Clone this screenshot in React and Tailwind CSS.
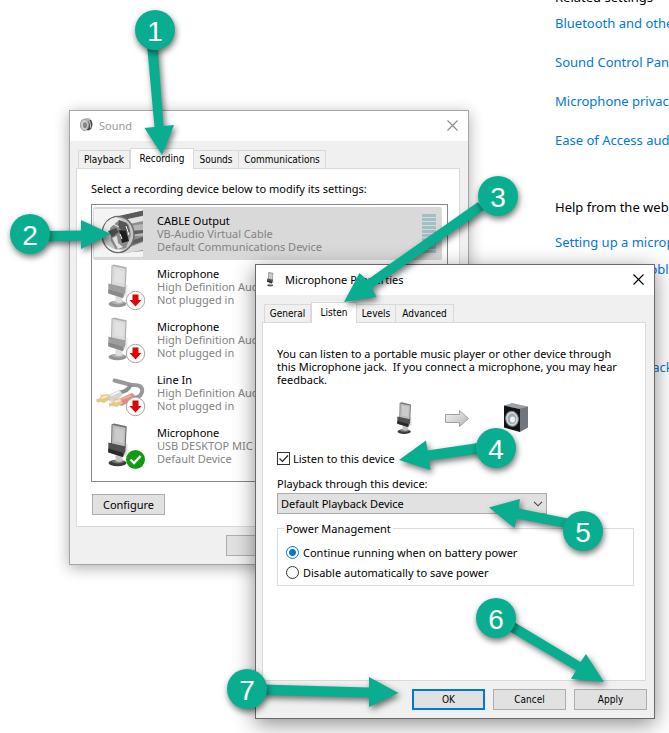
import { useId } from "react";

const GREEN = "#09ae90";

function MicShape({ faded = false }) {
  return (
    <g opacity={faded ? 0.55 : 1}>
      <ellipse cx="24.500" cy="44" rx="9" ry="3.200" fill="#3c3c3c" />
      <ellipse cx="25" cy="42.600" rx="6" ry="1.800" fill="#777" />
      <path d="M22.500 35h7v7q-3.500 1.800-7 0z" fill="#c4c4c4" />
      <path d="M29.500 25l5-.5v11l-5 3z" fill="#dcdcdc" />
      <path d="M18.500 5.500l2.500-1 12.700 2.800-1 21.500-14.700-3z" fill="#707070" />
      <path d="M19.500 6l13 2.800-.9 19-12.600-2.300z" fill="#bdbdbd" />
      <path d="M22 9l8.800 1.900-.6 13-8.800-2z" fill="#cbcbcb" />
      <path d="M15.300 23.500l17.200 4v4.500l-2.500 6-14.700-4.600z" fill="#505050" />
      <path d="M15.300 29.500l14.700 4.200v4.200l-14.700-4.600z" fill="#2a2a2a" />
    </g>
  );
}

function UnpluggedBadge() {
  return (
    <g>
      <circle cx="42.500" cy="40.500" r="9.200" fill="#fff" stroke="#a6a6a6" />
      <path d="M39.500 34.500h6v5.500h3l-6 6.500-6-6.500h3z" fill="#dc0505" />
    </g>
  );
}

function CheckBadge() {
  return (
    <g>
      <circle cx="42.500" cy="40.500" r="9.500" fill="#129a12" />
      <path d="M37.500 40.500l3.500 3.500 6.500-7" fill="none" stroke="#fff" strokeWidth="2.400" />
    </g>
  );
}

function CableIcon() {
  return (
    <svg viewBox="0 0 64 53" className="h-[53px] w-16 shrink-0" aria-hidden="true">
      <rect x="1" y="2" width="49" height="48" fill="#f4f4f4" />
      <path d="M26 9L50 4v40L28 46z" fill="#8d8d8d" />
      <path d="M26 9L50 3.500v5L30 13z" fill="#5a5a5a" />
      <path d="M30 13l20-4v5l-18 4z" fill="#e2e2e2" />
      <path d="M36 19l14-2v12H38z" fill="#b5b5b5" />
      <path d="M37 24l13-1v3l-13 2zM37 34l13-4v4l-14 5z" fill="#5d5d5d" />
      <path d="M32 42l18-7v8L28 47z" fill="#d9d9d9" />
      <ellipse cx="25" cy="27.500" rx="16" ry="18" fill="#c6c6c6" stroke="#6b6b6b" strokeWidth="1.500" />
      <path d="M10 24q2-12 13-14l6 3-8 9-10 6z" fill="#ececec" />
      <path d="M17 21l9-8 10 5 2 10-5 13-10 2-5-9z" fill="#8a8a8a" />
      <path d="M26 13l8 3 3 9-5 1-7-6z" fill="#555" />
      <path d="M26 23l7 1 3 10-7 2z" fill="#1e1e1e" />
      <path d="M15 24l8-3 3 4-7 5z" fill="#4c4c4c" />
      <path d="M19 31l5-2 1 7 5 4-5 2z" fill="#e4e4e4" />
      <path d="M27 27l2 5M33 19l3 9M20 17l6 3" stroke="#f5f5f5" strokeWidth="1" />
      <path d="M12 37q5 8 14 8l4-2-9-1z" fill="#f2f2f2" />
    </svg>
  );
}

function DeviceMic({ faded }) {
  return (
    <svg viewBox="0 0 64 53" className="h-[53px] w-16 shrink-0" aria-hidden="true">
      <MicShape faded={faded} />
      {faded ? <UnpluggedBadge /> : <CheckBadge />}
    </svg>
  );
}

function LineInIcon() {
  return (
    <svg viewBox="0 0 64 53" className="h-[53px] w-16 shrink-0" aria-hidden="true">
      <g fill="none" strokeLinecap="round">
        <path d="M21.500 14.500l17 4.500q12-1 10.500 7-2 7-11 5.500" stroke="#999" strokeWidth="4" />
        <path d="M37 20q-2 5-10 6.500" stroke="#8e8e8e" strokeWidth="4" />
      </g>
      <path d="M15 29l11-5q4 2 3 6l-10 6q-5-1-4-7z" fill="#d3d3d8" />
      <path d="M17 29l8-4 3 1-9 4z" fill="#f3f3f3" />
      <path d="M3 33.500l4-1.500 1-3 7-1 2 5-6 4-3-1-4 .5z" fill="#e6c886" />
      <path d="M8 31l6-2 1 2-6 2z" fill="#f7e6bb" />
      <path d="M26 33l13-6q4 2 3 6l-13 7q-5-1-3-7z" fill="#e08b84" />
      <path d="M28 33l9-4 3 1-11 4z" fill="#efb1ab" />
      <path d="M16 37.500l4-1.500 1-3 6-1 3 5-6 4-4-1-4 .5z" fill="#e6c886" />
      <path d="M21 35l6-2 1 2-6 2z" fill="#f7e6bb" />
      <UnpluggedBadge />
    </svg>
  );
}

function SoundTitleIcon() {
  return (
    <svg viewBox="0 0 16 16" className="size-4" aria-hidden="true">
      <ellipse cx="9" cy="7.500" rx="4.500" ry="6" fill="#4a4a4a" />
      <path d="M2 3l5-2 5 1-3 3-5 8-3-3z" fill="#b9b9b9" />
      <ellipse cx="5.500" cy="8" rx="4" ry="5.600" fill="#cfcfcf" stroke="#a0a0a0" />
      <ellipse cx="6" cy="8.200" rx="2" ry="3" fill="#858585" />
      <path d="M10.500 4l1.500 7" stroke="#d5d5d5" />
    </svg>
  );
}

function MicTitleIcon() {
  return (
    <svg viewBox="9 1 48 48" className="size-4" aria-hidden="true">
      <MicShape />
    </svg>
  );
}

function PushButton({ primary, children }) {
  return (
    <button
      className={`h-[21px] w-[73px] bg-[#e1e1e1] font-['DejaVu_Sans_Condensed','DejaVu_Sans',sans-serif] text-[10px] leading-[13px] ${
        primary ? "border-2 border-[#0078d7]" : "border border-[#adadad]"
      }`}
    >
      {children}
    </button>
  );
}

function Window({ title, icon, tabs, active, inactive, place, footer, children }) {
  return (
    <section
      className={`absolute flex w-[400px] flex-col border bg-[#f0f0f0] ${
        inactive
          ? "border-[#a5a5a5] shadow-[0_3px_14px_rgba(0,0,0,0.32)]"
          : "border-[#686868] shadow-[0_5px_20px_rgba(0,0,0,0.45)]"
      } ${place}`}
    >
      <header className="flex h-[30px] items-center gap-1 bg-white pr-2.5 pb-0.5 pl-[9px]">
        {icon}
        <h2 className={`flex-1 text-[11px] leading-[13px] ${inactive ? "text-[#999]" : "text-black"}`}>{title}</h2>
        <button aria-label="Close">
          <svg viewBox="0 0 11 11" className={`size-[11px] ${inactive ? "text-[#8a8a8a]" : "text-black"}`}>
            <path d="M.5.5l10 10M10.500.5l-10 10" stroke="currentColor" strokeWidth="1.100" fill="none" />
          </svg>
        </button>
      </header>
      <div className="pt-[7px] pr-2 pl-1.5">
        <div
          role="tablist"
          className="flex h-5 items-end pl-0.5 font-['DejaVu_Sans_Condensed','DejaVu_Sans',sans-serif] text-[10px] leading-[13px]"
        >
          {tabs.map(([name, width], i) => (
            <button
              key={name}
              role="tab"
              aria-selected={name === active}
              className={`${width} border-[#d9d9d9] text-center ${
                name === active
                  ? "relative -mb-px h-[21px] border-x border-t bg-white pb-0.5"
                  : `h-[18px] border-t border-r ${i === 0 ? "border-l" : ""}`
              }`}
            >
              {name}
            </button>
          ))}
        </div>
        <div className="border border-[#d9d9d9] bg-white pr-[11px] pl-3.5">{children}</div>
      </div>
      {footer}
    </section>
  );
}

const devices = [
  { name: "CABLE Output", detail: "VB-Audio Virtual Cable", state: "Default Communications Device", icon: <CableIcon />, selected: true },
  { name: "Microphone", detail: "High Definition Audio Device", state: "Not plugged in", icon: <DeviceMic faded /> },
  { name: "Microphone", detail: "High Definition Audio Device", state: "Not plugged in", icon: <DeviceMic faded /> },
  { name: "Line In", detail: "High Definition Audio Device", state: "Not plugged in", icon: <LineInIcon /> },
  { name: "Microphone", detail: "USB DESKTOP MIC", state: "Default Device", icon: <DeviceMic /> },
];

function SoundWindow() {
  return (
    <Window
      title="Sound"
      icon={<SoundTitleIcon />}
      inactive
      place="top-[110px] left-[69px]"
      active="Recording"
      tabs={[
        ["Playback", "w-[52px]"],
        ["Recording", "w-16"],
        ["Sounds", "w-[45px]"],
        ["Communications", "w-[87px]"],
      ]}
      footer={
        <footer className="flex py-2 pl-[156px]">
          <PushButton>OK</PushButton>
        </footer>
      }
    >
      <p className="pt-[13px]">Select a recording device below to modify its settings:</p>
      <ul className="mt-[9px] h-[278px] border border-[#828790] pt-0.5 pr-[5px] pl-px">
        {devices.map((d, i) => (
          <li key={i} className={`flex h-[53px] items-center ${d.selected ? "rounded-xs bg-[#d9d9d9] pr-1.5" : ""}`}>
            {d.icon}
            <div className="flex-1 text-[#838383]">
              <p className="text-black">{d.name}</p>
              <p>{d.detail}</p>
              <p>{d.state}</p>
            </div>
            {d.selected && (
              <div className="flex flex-col gap-px">
                {Array.from({ length: 10 }, (_, n) => (
                  <span key={n} className="h-[3px] w-3.5 bg-[#a3bfc6]" />
                ))}
              </div>
            )}
          </li>
        ))}
      </ul>
      <div className="flex pt-3 pb-[11px] pl-px">
        <button className="h-[21px] w-[73px] border border-[#adadad] bg-[#e1e1e1]">Configure</button>
      </div>
    </Window>
  );
}

function Radio({ label, defaultChecked }) {
  const id = useId();
  return (
    <div className="flex items-center gap-1">
      <input
        id={id}
        type="radio"
        name="power"
        defaultChecked={defaultChecked}
        className="size-[13px] appearance-none rounded-full border border-[#333] bg-white checked:border-[#0078d7] checked:bg-[radial-gradient(circle,#0078d7_3px,#fff_4px)]"
      />
      <label htmlFor={id}>{label}</label>
    </div>
  );
}

function PropertiesWindow() {
  return (
    <Window
      title="Microphone Properties"
      icon={<MicTitleIcon />}
      place="top-[264px] left-[255px]"
      active="Listen"
      tabs={[
        ["General", "w-[47px]"],
        ["Listen", "w-[46px]"],
        ["Levels", "w-[39px]"],
        ["Advanced", "w-[58px]"],
      ]}
      footer={
        <footer className="flex justify-end gap-2 py-2 pr-[7px]">
          <PushButton primary>OK</PushButton>
          <PushButton>Cancel</PushButton>
          <PushButton>Apply</PushButton>
        </footer>
      }
    >
      <p className="pt-6 pr-3">
        You can listen to a portable music player or other device through this Microphone jack.&nbsp; If you connect a
        microphone, you may hear feedback.
      </p>
      <div className="flex gap-6 pt-4 pl-[111px]">
        <svg viewBox="0 0 32 32" className="size-8" aria-hidden="true">
          <g transform="translate(-2 -3) scale(.74)">
            <MicShape />
          </g>
        </svg>
        <svg viewBox="0 0 32 32" className="size-8" aria-hidden="true">
          <defs>
            <linearGradient id="flow" x1="0" x2="1" y1="0" y2="1">
              <stop offset="0" stopColor="#f6f6f6" />
              <stop offset="1" stopColor="#b5b5b5" />
            </linearGradient>
          </defs>
          <path d="M1.500 12.500h14v-4l9 8-9 8v-4h-14z" fill="url(#flow)" stroke="#a0a0a0" />
        </svg>
        <svg viewBox="0 0 32 32" className="size-8" aria-hidden="true">
          <path d="M4 3.500l8-2.500 16 3.500-8 2.500z" fill="#9da0a5" />
          <path d="M20 6.500l8-2v21l-8 4.500z" fill="#71757c" />
          <path d="M4 3.500L20 7v23L4 25.500z" fill="#131313" />
          <ellipse cx="12" cy="16.800" rx="6.300" ry="7.500" transform="rotate(-10 12 16.800)" fill="#d3dade" stroke="#7d8488" />
          <ellipse cx="12" cy="16.800" rx="4.300" ry="5.500" fill="#a0abb1" />
          <ellipse cx="12.500" cy="17.500" rx="2.500" ry="3" fill="#edf3f5" />
        </svg>
      </div>
      <div className="flex items-center gap-[3px] pt-[18px]">
        <span className="relative flex">
          <input
            id="listen"
            type="checkbox"
            defaultChecked
            className="peer size-[13px] appearance-none border border-[#333] bg-white"
          />
          <svg
            viewBox="0 0 13 13"
            className="pointer-events-none absolute inset-0 hidden size-[13px] peer-checked:block"
            aria-hidden="true"
          >
            <path d="M2.500 6.500l3 3 5.500-6" fill="none" stroke="#222" strokeWidth="1.200" />
          </svg>
        </span>
        <label htmlFor="listen">Listen to this device</label>
      </div>
      <label htmlFor="playback" className="mt-3 block">
        Playback through this device:
      </label>
      <div className="relative mt-[3px] w-[270px]">
        <select
          id="playback"
          className="block h-[21px] w-full appearance-none border border-[#adadad] bg-[#e1e1e1] pl-[3px] leading-[13px]"
        >
          <option>Default Playback Device</option>
        </select>
        <svg
          viewBox="0 0 10 6"
          className="pointer-events-none absolute top-2 right-1 h-1.5 w-2.5"
          aria-hidden="true"
        >
          <path d="M1 .8l4 4 4-4" fill="none" stroke="#444" strokeWidth="1.100" />
        </svg>
      </div>
      <div className="pt-2 pb-[94px]">
        <fieldset className="border border-[#dcdcdc] px-2 pb-1.5">
          <legend className="-ml-0.5 px-0.5">Power Management</legend>
          <div className="flex flex-col gap-[7px] pt-[11px]">
            <Radio label="Continue running when on battery power" defaultChecked />
            <Radio label="Disable automatically to save power" />
          </div>
        </fieldset>
      </div>
    </Window>
  );
}

const steps = [
  { n: 1, x: 155, y: 30, arrow: "147,45 157.500,45 163.500,126 174,125 162,155 144.500,128 154.500,127" },
  { n: 2, x: 30, y: 234, arrow: "45,231 81,230.500 81,220 111,234 81,249 81,240.500 45,241.500" },
  { n: 3, x: 498, y: 196, arrow: "478,202 367,280 359.500,273 344,302 376.500,297 372,288 484,210" },
  { n: 4, x: 496, y: 448, arrow: "478,443 427.500,450.500 426,440.500 399,460 430.500,470 429,460.500 480,453.500" },
  { n: 5, x: 583, y: 531, arrow: "568,518.500 518.500,508.500 520,499 489,507.500 514.500,528 516.500,518.500 566,528" },
  { n: 6, x: 496, y: 618, arrow: "514,622 580.500,662 586,654 604,682 571,679 576,670.500 509,631" },
  { n: 7, x: 247, y: 689, arrow: "262,684.500 369,687.500 369,677 398.500,693 369,707 369,697.500 262,695" },
];

function Callouts() {
  return (
    <svg
      viewBox="0 0 669 733"
      className="pointer-events-none absolute top-0 left-0 h-[733px] w-[669px] font-['Liberation_Sans',Arial,sans-serif] text-[28px]"
    >
      {steps.map((s) => (
        <g key={s.n} className="drop-shadow-[2px_3px_3px_rgba(0,0,0,0.55)]">
          <polygon points={s.arrow} fill={GREEN} />
        </g>
      ))}
      {steps.map((s) => (
        <g key={s.n}>
          <circle cx={s.x} cy={s.y} r="20" fill={GREEN} className="drop-shadow-[1px_3px_3px_rgba(0,0,0,0.55)]" />
          <text x={s.x} y={s.y + 11} textAnchor="middle" fill="#fff">
            {s.n}
          </text>
        </g>
      ))}
    </svg>
  );
}

const links = ["Bluetooth and other devices", "Sound Control Panel", "Microphone privacy settings", "Ease of Access audio settings"];

export default function App() {
  return (
    <main className="relative min-h-screen overflow-hidden bg-white font-['Noto_Sans','Open_Sans',sans-serif] text-[11px] leading-[13px] text-black">
      <aside className="-mt-3 ml-[555px] text-[13px] leading-[18px] whitespace-nowrap text-[#0078d7]">
        <h3 className="text-black">Related settings</h3>
        <nav className="flex flex-col gap-[21px] pt-2">
          {links.map((l) => (
            <a key={l} href="#">
              {l}
            </a>
          ))}
        </nav>
        <h3 className="pt-[49px] text-black">Help from the web</h3>
        <nav className="flex flex-col gap-[9px] pt-[17px]">
          <a href="#">Setting up a microphone</a>
          <a href="#">Fixing sound problems</a>
        </nav>
        <a href="#" className="mt-20 ml-8 block">
          Give feedback
        </a>
      </aside>
      <SoundWindow />
      <PropertiesWindow />
      <Callouts />
    </main>
  );
}
